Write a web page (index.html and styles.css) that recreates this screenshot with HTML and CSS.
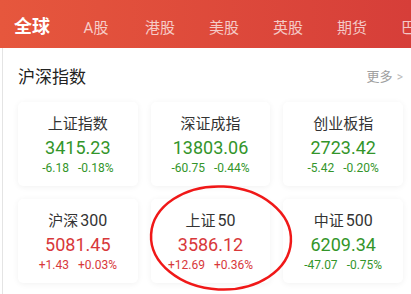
FILE: index.html
```html
<!DOCTYPE html>
<html lang="zh-CN">
<head>
    <meta charset="UTF-8">
    <meta name="viewport" content="width=device-width, initial-scale=1.0">
    <title>行情</title>
    <link rel="stylesheet" href="styles.css">
</head>
<body>
    <div class="app">
        <div class="tabs">
            <div class="tab active">全球</div>
            <div class="tab">A股</div>
            <div class="tab">港股</div>
            <div class="tab">美股</div>
            <div class="tab">英股</div>
            <div class="tab">期货</div>
            <div class="tab">巴西</div>
        </div>

        <div class="section">
            <div class="section-head">
                <div class="section-title">沪深指数</div>
                <div class="more">更多 <span class="arrow">&gt;</span></div>
            </div>

            <div class="grid">
                <div class="card down">
                    <div class="name">上证指数</div>
                    <div class="price">3415.23</div>
                    <div class="change"><span>-6.18</span><span>-0.18%</span></div>
                </div>
                <div class="card down">
                    <div class="name">深证成指</div>
                    <div class="price">13803.06</div>
                    <div class="change"><span>-60.75</span><span>-0.44%</span></div>
                </div>
                <div class="card down">
                    <div class="name">创业板指</div>
                    <div class="price">2723.42</div>
                    <div class="change"><span>-5.42</span><span>-0.20%</span></div>
                </div>
                <div class="card up">
                    <div class="name">沪深<span class="num">300</span></div>
                    <div class="price">5081.45</div>
                    <div class="change"><span>+1.43</span><span>+0.03%</span></div>
                </div>
                <div class="card up">
                    <div class="name">上证<span class="num">50</span></div>
                    <div class="price">3586.12</div>
                    <div class="change"><span>+12.69</span><span>+0.36%</span></div>
                </div>
                <div class="card down">
                    <div class="name">中证<span class="num">500</span></div>
                    <div class="price">6209.34</div>
                    <div class="change"><span>-47.07</span><span>-0.75%</span></div>
                </div>
            </div>
        </div>

        <svg class="mark" width="150" height="112" viewBox="0 0 150 112">
            <ellipse cx="75" cy="56" rx="70" ry="51.5" fill="none" stroke="#f01818" stroke-width="2.5" transform="rotate(3 75 56)"/>
        </svg>
    </div>
</body>
</html>
```

FILE: styles.css
```css
body {
    margin: 0;
    background: #fff;
    font-family: Roboto, "Noto Sans CJK SC", sans-serif;
    overflow: hidden;
}

.app {
    position: relative;
    height: 294px;
    margin-left: 2px;
    border-left: 1px solid #e4e4e4;
}

.tabs {
    display: flex;
    align-items: baseline;
    height: 48px;
    box-sizing: border-box;
    padding-top: 12px;
    margin-left: -3px;
    background: linear-gradient(90deg, #e6573d, #d63e39);
    white-space: nowrap;
    overflow: hidden;
}

.tab {
    flex: 0 0 64px;
    text-align: center;
    font-size: 15px;
    color: rgba(255, 255, 255, 0.72);
}

.tab.active {
    font-size: 18px;
    font-weight: bold;
    color: #fff;
}

.section {
    padding: 0 8px 0 15px;
}

.section-head {
    display: flex;
    justify-content: space-between;
    align-items: center;
    height: 54px;
}

.section-title {
    font-size: 17px;
    color: #222;
}

.more {
    font-size: 13px;
    color: #a0a0a0;
}

.more .arrow {
    font-size: 12px;
    color: #bbb;
    margin-left: 1px;
}

.grid {
    display: grid;
    grid-template-columns: repeat(3, 1fr);
    gap: 13px;
}

.card {
    height: 84px;
    background: #fff;
    border-radius: 5px;
    box-shadow: 0 1px 6px rgba(0, 0, 0, 0.06);
    display: flex;
    flex-direction: column;
    align-items: center;
    box-sizing: border-box;
    padding-top: 13px;
}

.name {
    font-size: 15px;
    line-height: 18px;
    color: #333;
}

.name .num {
    margin-left: 2px;
    font-size: 16px;
}

.price {
    margin-top: 4px;
    font-size: 18px;
    line-height: 22px;
}

.change {
    margin-top: 2px;
    font-size: 12px;
    line-height: 14px;
    display: flex;
    gap: 9px;
}

.down .price,
.down .change {
    color: #33952a;
}

.up .price,
.up .change {
    color: #d8383a;
}

.mark {
    position: absolute;
    left: 143px;
    top: 182px;
}
```
